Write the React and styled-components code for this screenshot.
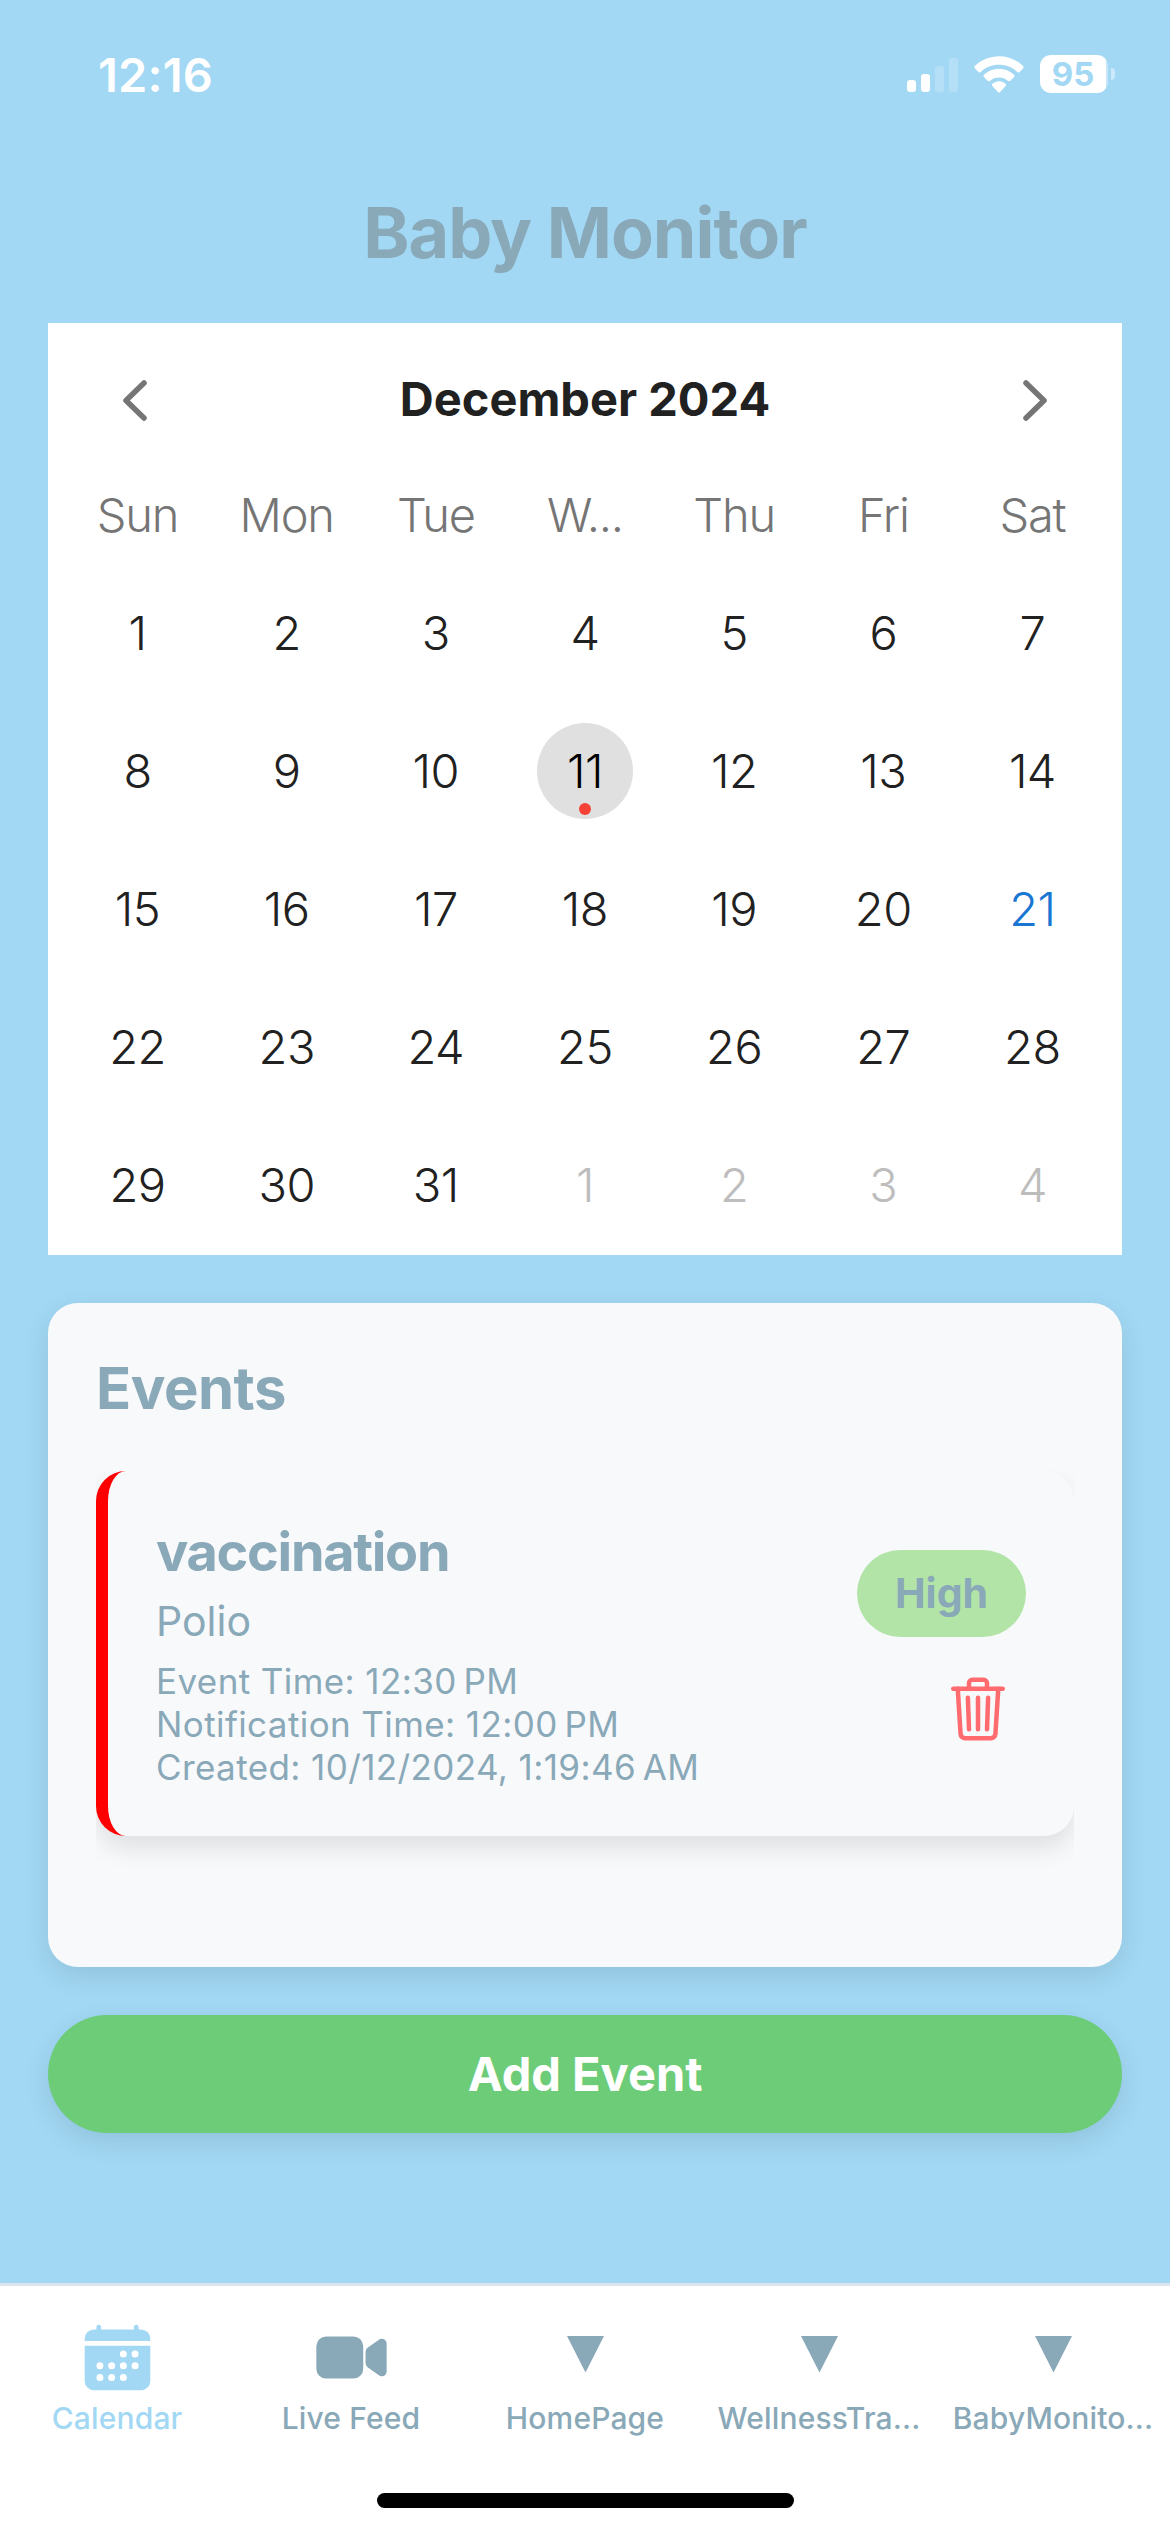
import React from 'react';
import styled, { createGlobalStyle } from 'styled-components';
import { IoCalendar, IoVideocam, IoTrashOutline } from 'react-icons/io5';

const color = {
  sky: '#a2d8f4',
  slate: '#89a8b8',
  panel: '#f8f9fb',
  ink: '#212121',
};

const GlobalStyle = createGlobalStyle`
  * { box-sizing: border-box; }
  body {
    margin: 0;
    background: ${color.sky};
    font-family: Inter, "Liberation Sans", sans-serif;
  }
  button { font: inherit; border: 0; background: none; padding: 0; }
`;

const Screen = styled.div`
  width: 1170px;
  height: 2532px;
  display: flex;
  flex-direction: column;
  background: ${color.sky};
  overflow: hidden;
  white-space: nowrap;
`;

const StatusBar = styled.header`
  height: 148px;
  flex: none;
  display: flex;
  align-items: center;
  justify-content: space-between;
  padding: 0 55px 0 97px;
  color: #fff;
`;

const Clock = styled.span`
  font-size: 47px;
  line-height: 60px;
  font-weight: 600;
  letter-spacing: 0.2px;
  padding: 1px 0 0 1px;
`;

const StatusIcons = styled.div`
  display: flex;
  align-items: center;
  gap: 16px;
`;

const Signal = styled.div`
  display: flex;
  align-items: flex-end;
  gap: 5px;
  height: 35px;
`;

const SignalBar = styled.i`
  width: 9px;
  height: ${(p) => p.$height}px;
  border-radius: 3px;
  background: #fff;
  opacity: ${(p) => (p.$on ? 1 : 0.2)};
`;

const Battery = styled.div`
  display: flex;
  align-items: center;
  gap: 3px;
`;

const BatteryBody = styled.div`
  width: 68px;
  height: 38px;
  border-radius: 11px;
  background: linear-gradient(90deg, #fff 66px, rgba(255, 255, 255, 0.4) 66px);
  color: ${color.sky};
  font-size: 33px;
  line-height: 38px;
  font-weight: 700;
  text-align: center;
  padding-right: 2px;
`;

const BatteryTip = styled.i`
  width: 4px;
  height: 12px;
  border-radius: 0 4px 4px 0;
  background: rgba(255, 255, 255, 0.45);
`;

const PageTitle = styled.h1`
  margin: 48px 0 54px;
  font-size: 70px;
  line-height: 73px;
  font-weight: 700;
  letter-spacing: -1px;
  text-align: center;
  color: ${color.slate};
`;

const Calendar = styled.section`
  height: 932px;
  flex: none;
  margin: 0 48px;
  padding: 32px 15px 0;
  background: #fff;
`;

const MonthBar = styled.div`
  height: 90px;
  display: flex;
  align-items: center;
  justify-content: space-between;
  padding: 0 60px;
`;

const MonthName = styled.h2`
  margin: 0;
  padding-bottom: 2px;
  font-size: 47px;
  line-height: 60px;
  font-weight: 700;
  color: ${color.ink};
`;

const ArrowButton = styled.button`
  display: flex;
  color: #757575;
`;

const WeekGrid = styled.div`
  display: grid;
  grid-template-columns: repeat(7, 1fr);
  justify-items: center;
`;

const Weekdays = styled(WeekGrid)`
  margin: 40px 0 19px;
  font-size: 47px;
  line-height: 60px;
  font-weight: 300;
  letter-spacing: -1.2px;
  color: #757575;
`;

const Days = styled(WeekGrid)`
  grid-auto-rows: 138px;
  align-items: center;
`;

const Day = styled.button`
  position: relative;
  width: 96px;
  height: 96px;
  border-radius: 50%;
  font-size: 47px;
  line-height: 94px;
  font-weight: 300;
  letter-spacing: -0.5px;
  text-align: center;
  background: ${(p) => (p.$kind === 'selected' ? '#e0e0e0' : 'transparent')};
  color: ${(p) =>
    ({ selected: '#000', today: '#1976d2', outside: '#bdbdbd' })[p.$kind] || color.ink};
`;

const EventDot = styled.i`
  position: absolute;
  left: 42px;
  bottom: 4px;
  width: 12px;
  height: 12px;
  border-radius: 50%;
  background: #f44336;
`;

const EventsPanel = styled.section`
  height: 664px;
  flex: none;
  margin: 48px 48px 0;
  padding: 48px;
  border-radius: 30px;
  background: ${color.panel};
  box-shadow: 0 9px 27px rgba(0, 0, 0, 0.1);
`;

const EventsTitle = styled.h2`
  margin: 0 0 46px;
  font-size: 58px;
  line-height: 74px;
  font-weight: 700;
  letter-spacing: -0.5px;
  color: ${color.slate};
`;

const EventList = styled.div`
  height: 448px;
  overflow: hidden;
`;

const EventCard = styled.article`
  height: 365px;
  display: flex;
  justify-content: space-between;
  padding: 48px;
  border-left: 12px solid #f00;
  border-radius: 30px;
  background: ${color.panel};
  box-shadow: 0 12px 24px rgba(0, 0, 0, 0.1);
  color: ${color.slate};
`;

const EventName = styled.h3`
  margin: 0 0 12px;
  font-size: 54px;
  line-height: 65px;
  font-weight: 700;
  letter-spacing: -1.3px;
`;

const EventNote = styled.p`
  margin: 0 0 14px;
  font-size: 41px;
  line-height: 50px;
`;

const EventMeta = styled.p`
  margin: 0;
  font-size: 35px;
  line-height: 43px;
  letter-spacing: 0.4px;
`;

const EventActions = styled.div`
  display: flex;
  flex-direction: column;
  align-items: flex-end;
  justify-content: center;
  gap: 24px;
`;

const Priority = styled.span`
  width: 169px;
  height: 87px;
  flex: none;
  border-radius: 44px;
  background: #b2e4a8;
  font-size: 41px;
  line-height: 87px;
  font-weight: 700;
  text-align: center;
`;

const DeleteButton = styled.button`
  display: flex;
  padding: 12px;
  color: #ff6b6f;
`;

const AddButton = styled.button`
  height: 118px;
  flex: none;
  margin: 48px 48px 0;
  padding-bottom: 2px;
  border-radius: 59px;
  background: #6dcc78;
  box-shadow: 0 9px 27px rgba(0, 0, 0, 0.1);
  color: #fff;
  font-size: 47px;
  font-weight: 700;
`;

const TabBar = styled.nav`
  height: 249px;
  flex: none;
  margin-top: auto;
  display: flex;
  flex-direction: column;
  align-items: center;
  border-top: 3px solid #dbe6ec;
  background: #fff;
`;

const Tabs = styled.div`
  width: 100%;
  height: 207px;
  display: grid;
  grid-template-columns: repeat(5, 1fr);
`;

const Tab = styled.button`
  display: flex;
  flex-direction: column;
  align-items: center;
  padding-top: 34px;
  color: ${(p) => (p.$active ? color.sky : color.slate)};
`;

const TabIcon = styled.span`
  height: 75px;
  display: flex;
  align-items: center;
`;

const TabLabel = styled.span`
  margin-top: 5px;
  font-size: 30px;
  line-height: 37px;
  font-weight: 500;
  letter-spacing: 0.15px;
`;

const HomeIndicator = styled.div`
  width: 417px;
  height: 15px;
  border-radius: 8px;
  background: #000;
`;

const WifiIcon = () => (
  <svg width="50" height="37" viewBox="0 0 50 37" fill="#fff">
    <path d="M25 .3c9 0 17.500 3.500 24.100 9.600.7.700.7 1.600.1 2.300l-3.600 3.700c-.6.700-1.600.700-2.300.1C38.300 11.300 31.900 8.800 25 8.800S11.700 11.300 6.700 16c-.7.600-1.700.600-2.300-.1L.8 12.200c-.6-.7-.6-1.600.1-2.300C7.500 3.800 16 .3 25 .3z" />
    <path d="M25 12.800c5.700 0 11 2.200 15 5.900.7.700.7 1.700.1 2.400l-3.700 3.700c-.6.600-1.600.6-2.300.1-2.500-2.200-5.700-3.400-9.100-3.400s-6.600 1.200-9.100 3.400c-.7.500-1.700.5-2.300-.1l-3.700-3.700c-.6-.7-.6-1.700.1-2.400 4-3.700 9.300-5.900 15-5.900z" />
    <path d="M25 25.300c2.400 0 4.700.9 6.500 2.400.7.600.7 1.600.1 2.200l-5.500 6.100c-.6.700-1.600.7-2.200 0l-5.500-6.100c-.6-.6-.6-1.600.1-2.200 1.800-1.500 4.100-2.400 6.500-2.400z" />
  </svg>
);

const Chevron = ({ right }) => (
  <svg width="24" height="41" viewBox="0 0 24 41" fill="none" stroke="currentColor"
    strokeWidth="5.500" strokeLinecap="round" strokeLinejoin="round">
    <path d={right ? 'M3 3L21 20.500L3 38' : 'M21 3L3 20.500L21 38'} />
  </svg>
);

const Triangle = () => (
  <svg width="37" height="43" viewBox="0 0 37 43" fill="currentColor">
    <path d="M0 0H37L18.500 36.500z" />
  </svg>
);

const weekdays = ['Sun', 'Mon', 'Tue', 'W...', 'Thu', 'Fri', 'Sat'];

const days = Array.from({ length: 35 }, (_, i) => {
  const n = i + 1;
  if (n > 31) return { label: n - 31, kind: 'outside' };
  if (n === 11) return { label: n, kind: 'selected', dot: true };
  if (n === 21) return { label: n, kind: 'today' };
  return { label: n };
});

const signal = [
  { height: 12, on: true },
  { height: 18, on: true },
  { height: 26 },
  { height: 34 },
];

const tabs = [
  { label: 'Calendar', icon: <IoCalendar size={75} />, active: true },
  { label: 'Live Feed', icon: <IoVideocam size={75} /> },
  { label: 'HomePage', icon: <Triangle /> },
  { label: 'WellnessTra...', icon: <Triangle /> },
  { label: 'BabyMonito...', icon: <Triangle /> },
];

export default function App() {
  return (
    <Screen>
      <GlobalStyle />
      <StatusBar>
        <Clock>12:16</Clock>
        <StatusIcons>
          <Signal>
            {signal.map((s) => (
              <SignalBar key={s.height} $height={s.height} $on={s.on} />
            ))}
          </Signal>
          <WifiIcon />
          <Battery>
            <BatteryBody>95</BatteryBody>
            <BatteryTip />
          </Battery>
        </StatusIcons>
      </StatusBar>

      <PageTitle>Baby Monitor</PageTitle>

      <Calendar>
        <MonthBar>
          <ArrowButton aria-label="Previous month"><Chevron /></ArrowButton>
          <MonthName>December 2024</MonthName>
          <ArrowButton aria-label="Next month"><Chevron right /></ArrowButton>
        </MonthBar>
        <Weekdays>
          {weekdays.map((d) => <span key={d}>{d}</span>)}
        </Weekdays>
        <Days>
          {days.map((d, i) => (
            <Day key={i} $kind={d.kind}>
              {d.label}
              {d.dot && <EventDot />}
            </Day>
          ))}
        </Days>
      </Calendar>

      <EventsPanel>
        <EventsTitle>Events</EventsTitle>
        <EventList>
          <EventCard>
            <div>
              <EventName>vaccination</EventName>
              <EventNote>Polio</EventNote>
              <EventMeta>Event Time: 12:30{'\u202f'}PM</EventMeta>
              <EventMeta>Notification Time: 12:00{'\u202f'}PM</EventMeta>
              <EventMeta>Created: 10/12/2024, 1:19:46{'\u202f'}AM</EventMeta>
            </div>
            <EventActions>
              <Priority>High</Priority>
              <DeleteButton aria-label="Delete event"><IoTrashOutline size={72} /></DeleteButton>
            </EventActions>
          </EventCard>
        </EventList>
      </EventsPanel>

      <AddButton>Add Event</AddButton>

      <TabBar>
        <Tabs>
          {tabs.map((t) => (
            <Tab key={t.label} $active={t.active}>
              <TabIcon>{t.icon}</TabIcon>
              <TabLabel>{t.label}</TabLabel>
            </Tab>
          ))}
        </Tabs>
        <HomeIndicator />
      </TabBar>
    </Screen>
  );
}
